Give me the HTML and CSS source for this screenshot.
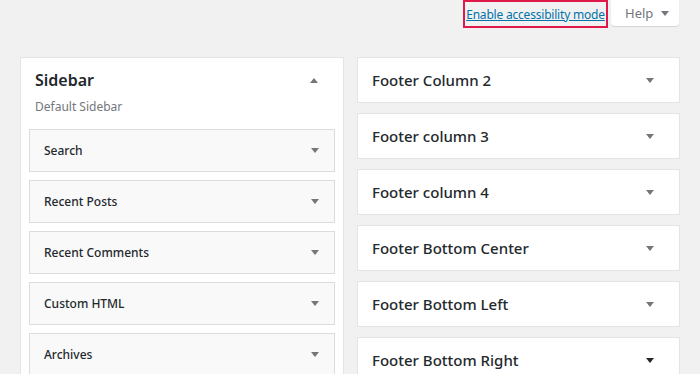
FILE: index.html
```html
<!DOCTYPE html>
<html lang="en">
<head>
  <meta charset="UTF-8">
  <title>Widgets</title>
  <link rel="stylesheet" href="styles.css">
</head>
<body>
  <div class="screen-meta">
    <a class="a11y-link" href="#">Enable accessibility mode</a>
    <button class="help-button">Help <span class="arrow down"></span></button>
  </div>

  <div class="widgets">
    <div class="sidebar-box">
      <div class="sidebar-head">
        <h2>Sidebar</h2>
        <span class="arrow up"></span>
      </div>
      <p class="description">Default Sidebar</p>
      <div class="widget"><span>Search</span><span class="arrow down"></span></div>
      <div class="widget"><span>Recent Posts</span><span class="arrow down"></span></div>
      <div class="widget"><span>Recent Comments</span><span class="arrow down"></span></div>
      <div class="widget"><span>Custom HTML</span><span class="arrow down"></span></div>
      <div class="widget"><span>Archives</span><span class="arrow down"></span></div>
    </div>

    <div class="area-list">
      <div class="area"><h2>Footer Column 2</h2><span class="arrow down"></span></div>
      <div class="area"><h2>Footer column 3</h2><span class="arrow down"></span></div>
      <div class="area"><h2>Footer column 4</h2><span class="arrow down"></span></div>
      <div class="area"><h2>Footer Bottom Center</h2><span class="arrow down"></span></div>
      <div class="area"><h2>Footer Bottom Left</h2><span class="arrow down"></span></div>
      <div class="area hover"><h2>Footer Bottom Right</h2><span class="arrow down"></span></div>
    </div>
  </div>
</body>
</html>
```

FILE: styles.css
```css
body {
  margin: 0;
  background: #f1f1f1;
  color: #23282d;
  font-family: "Noto Sans", "Open Sans", sans-serif;
  overflow: hidden;
}
.screen-meta {
  display: flex;
  justify-content: flex-end;
  align-items: flex-start;
  height: 57px;
  padding-right: 21px;
}
.a11y-link {
  display: flex;
  align-items: center;
  justify-content: center;
  box-sizing: border-box;
  width: 145px;
  height: 28px;
  border: 2px solid #e0194b;
  color: #0073aa;
  font-size: 12px;
  letter-spacing: -0.2px;
  text-decoration: underline;
}
.help-button {
  display: flex;
  align-items: center;
  gap: 8px;
  box-sizing: border-box;
  width: 68px;
  height: 26px;
  margin-left: 3px;
  padding: 0 0 0 14px;
  background: #fff;
  border: none;
  border-radius: 0 0 4px 4px;
  box-shadow: 0 1px 1px rgba(0, 0, 0, 0.12);
  color: #72777c;
  font-family: inherit;
  font-size: 13px;
}
.arrow {
  width: 0;
  height: 0;
  border-left: 4px solid transparent;
  border-right: 4px solid transparent;
}
.arrow.down {
  border-top: 5px solid #72777c;
}
.arrow.up {
  border-bottom: 5px solid #72777c;
}
.widgets {
  display: flex;
  gap: 13px;
  padding-left: 20px;
}
.sidebar-box {
  box-sizing: border-box;
  width: 324px;
  padding: 0 8px 20px;
  background: #fff;
  border: 1px solid #e2e4e7;
}
.sidebar-head {
  display: flex;
  justify-content: space-between;
  align-items: center;
  height: 44px;
  padding: 0 17px 0 6px;
}
.sidebar-head h2 {
  margin: 0;
  font-size: 16px;
  font-weight: 600;
}
.description {
  margin: -2px 0 15px 6px;
  height: 14px;
  line-height: 14px;
  font-size: 12px;
  color: #72777c;
}
.widget {
  display: flex;
  justify-content: space-between;
  align-items: center;
  box-sizing: border-box;
  height: 43px;
  margin-bottom: 8px;
  padding: 0 15px 0 14px;
  background: #f9f9f9;
  border: 1px solid #dcdcde;
  font-size: 12px;
  font-weight: 500;
}
.area-list {
  display: flex;
  flex-direction: column;
  gap: 10px;
  width: 323px;
}
.area {
  display: flex;
  justify-content: space-between;
  align-items: center;
  box-sizing: border-box;
  height: 46px;
  padding: 0 25px 0 14px;
  background: #fff;
  border: 1px solid #e2e4e7;
}
.area h2 {
  margin: 0;
  font-size: 15px;
  font-weight: 500;
}
.area.hover .arrow.down {
  border-top-color: #23282d;
}
```
